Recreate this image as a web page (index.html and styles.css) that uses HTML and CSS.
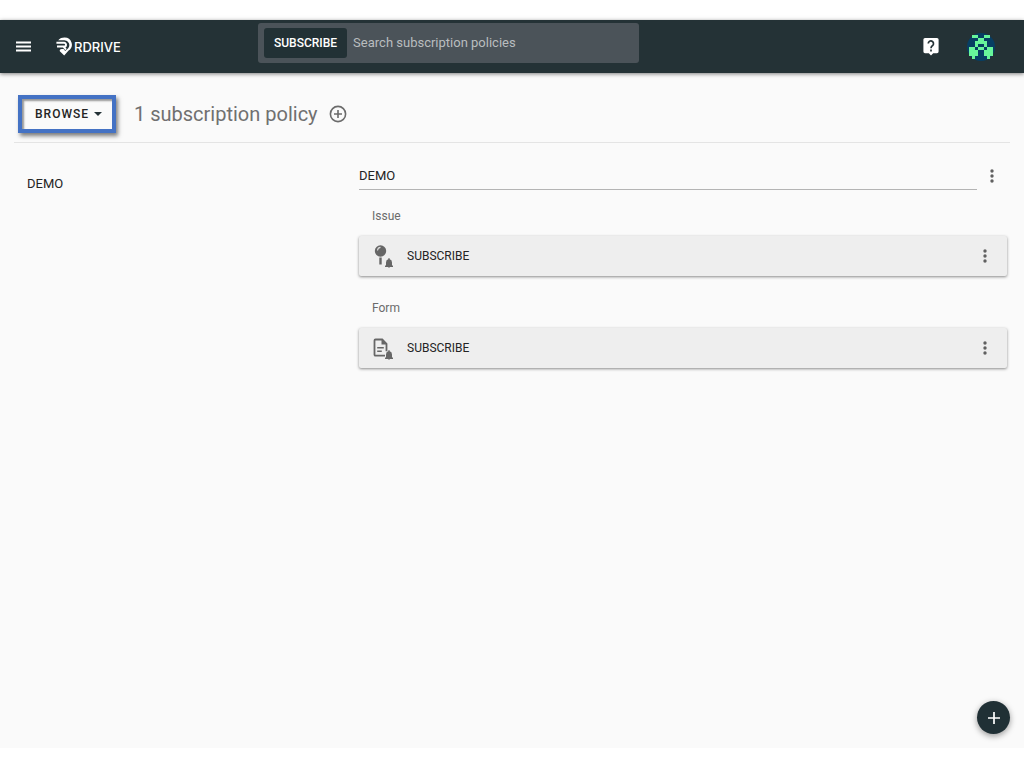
FILE: index.html
```html
<!DOCTYPE html>
<html lang="en">
<head>
<meta charset="utf-8">
<title>RDrive - Subscription policies</title>
<meta name="viewport" content="width=device-width, initial-scale=1">
<link rel="stylesheet" href="styles.css">
</head>
<body>
<div class="app">
  <header class="topbar">
    <button class="icon-btn menu-btn" aria-label="Menu">
      <svg width="16" height="12" viewBox="0 0 16 12"><path d="M0 1.500h15M0 5.500h15M0 9.500h15" stroke="#fff" stroke-width="1.800"/></svg>
    </button>
    <a class="logo" href="#">
      <svg width="17" height="19" viewBox="0 0 17 19" fill="none" stroke="#fff"><path d="M2.200 3.200C4 1 6 .4 8.400.4a7.200 7.200 0 0 1 4.200 13.200L8.200 18.400 3.600 14q0-1.900 2-1.900h2l1.600 2 3-2.800A5 5 0 0 0 8.400 3.200z" fill="#fff" stroke="none"/><path d="M.4 5.800h7.700a1.900 1.900 0 0 1 0 3.800H1M7.500 9.700l2.500 3" stroke-width="2"/></svg>
      <span>RDRIVE</span>
    </a>
    <form class="search" role="search">
      <button type="button" class="search-scope">SUBSCRIBE</button>
      <input class="search-input" type="text" aria-label="Search subscription policies" placeholder="Search subscription policies">
    </form>
    <div class="topbar-actions">
      <button class="icon-btn" aria-label="Help">
        <svg width="16" height="18" viewBox="0 0 16 18"><path d="M2 0h12q1.600 0 1.600 1.600v12q0 1.600-1.600 1.600h-3.800L8 17.600l-2.200-2.400H2Q.4 15.200.4 13.600v-12Q.4 0 2 0z" fill="#fff"/><path d="M5.300 5.600a2.600 2.600 0 1 1 4.500 1.700C8.700 8.300 8 8.700 8 10.200M8 11.500v1.900" stroke="#243236" stroke-width="1.700" fill="none"/></svg>
      </button>
      <button class="icon-btn" aria-label="Account">
        <svg width="28" height="28" viewBox="0 0 28 28"><circle cx="14" cy="14" r="14" fill="#073e63"/><path transform="translate(2 2) scale(3)" fill="#67f59b" d="M1 0h2v1H1zM5 0h2v1H5zM3 1h2v1H3zM2 2h4v2H5V3H3v1H2zM3 4h2v1H3zM0 4h2v1h1v2H2v1H1V7H0zM6 4h2v3H7v1H6V7H5V5h1z"/></svg>
      </button>
    </div>
  </header>

  <div class="page">
    <div class="toolbar">
      <button class="browse">BROWSE
        <svg width="8" height="4" viewBox="0 0 8 4"><path d="M0 0h8L4 4z" fill="#243236"/></svg>
      </button>
      <h1 class="title">1 subscription policy</h1>
      <button class="icon-btn" aria-label="Add subscription policy">
        <svg width="18" height="18" viewBox="0 0 18 18" fill="none" stroke="#6b6b6b" stroke-width="1.600"><circle cx="9" cy="9" r="7.600"/><path d="M9 5v8M5 9h8"/></svg>
      </button>
    </div>

    <div class="columns">
      <nav class="side"><a href="#demo">DEMO</a></nav>
      <main class="content" id="demo">
        <div class="group-head">
          <input class="group-name" type="text" value="DEMO" aria-label="Group name">
          <button class="icon-btn" aria-label="Group options">
            <svg class="dots" width="4" height="14" viewBox="0 0 4 14"><circle cx="2" cy="2" r="1.700"/><circle cx="2" cy="7" r="1.700"/><circle cx="2" cy="12" r="1.700"/></svg>
          </button>
        </div>
        <section class="kind">
          <h2 class="kind-name">Issue</h2>
          <div class="card">
            <svg width="20" height="24" viewBox="0 0 20 24"><circle cx="7.500" cy="7" r="5.700" fill="#666"/><path d="M4.500 6.500A3.300 3.300 0 0 1 7.500 3.400" stroke="#ddd" stroke-width="1.100" fill="none"/><path d="M7.500 13.500v7" stroke="#666" stroke-width="2.400"/><path d="M12 23v-1l1-1v-2.500q0-2.600 2.300-3.200v-1h1.400v1q2.300.6 2.300 3.200V21l1 1v1zM15 23h2q-1 1.500-2 0z" fill="#666"/></svg>
            <span class="card-title">SUBSCRIBE</span>
            <button class="icon-btn" aria-label="Policy options">
              <svg class="dots" width="4" height="14" viewBox="0 0 4 14"><circle cx="2" cy="2" r="1.700"/><circle cx="2" cy="7" r="1.700"/><circle cx="2" cy="12" r="1.700"/></svg>
            </button>
          </div>
        </section>
        <section class="kind">
          <h2 class="kind-name">Form</h2>
          <div class="card">
            <svg width="20" height="24" viewBox="0 0 20 24"><path d="M12 19.700H2.500q-1 0-1-1V4.500q0-1 1-1h6.700l4.300 4.300v7.500" fill="none" stroke="#666" stroke-width="1.800"/><path d="M8.500 3.500v5h5z" fill="#666"/><path d="M4.200 11.800h6.600M4.200 15.200h4.600" stroke="#666" stroke-width="1.500"/><path d="M12 23v-1l1-1v-2.500q0-2.600 2.300-3.200v-1h1.400v1q2.300.6 2.300 3.200V21l1 1v1zM15 23h2q-1 1.500-2 0z" fill="#666"/></svg>
            <span class="card-title">SUBSCRIBE</span>
            <button class="icon-btn" aria-label="Policy options">
              <svg class="dots" width="4" height="14" viewBox="0 0 4 14"><circle cx="2" cy="2" r="1.700"/><circle cx="2" cy="7" r="1.700"/><circle cx="2" cy="12" r="1.700"/></svg>
            </button>
          </div>
        </section>
      </main>
    </div>
  </div>
  <button class="fab" aria-label="Add">
    <svg width="12" height="12" viewBox="0 0 12 12"><path d="M6 0v12M0 6h12" stroke="#fff" stroke-width="1.700"/></svg>
  </button>
</div>
</body>
</html>
```
FILE: styles.css
```css
* { box-sizing: border-box; }

body {
  margin: 0;
  min-height: 100vh;
  padding: 20px 0;
  display: flex;
  background: #fff;
  color: #242424;
  font-family: Roboto, "Liberation Sans", sans-serif;
  font-size: 13px;
  line-height: 16px;
}

button, input { font: inherit; color: inherit; border: 0; padding: 0; background: none; }
button { cursor: pointer; }
a { color: inherit; text-decoration: none; }
svg { display: block; flex: none; }

.app { position: relative; flex: 1; min-width: 0; background: #fafafa; }

.icon-btn { display: flex; align-items: center; justify-content: center; flex: none; }

.topbar {
  display: grid;
  grid-template-columns: 242px minmax(0, 381px) 1fr;
  grid-template-areas: "brand search actions";
  align-items: center;
  height: 53px;
  padding: 0 29px 0 16px;
  background: #243236;
  box-shadow: 0 1px 4px rgba(0, 0, 0, .5);
}
.menu-btn { grid-area: brand; justify-self: start; }
.logo {
  grid-area: brand;
  margin-left: 40px;
  justify-self: start;
  display: flex;
  align-items: center;
  gap: 1px;
  color: #fff;
  font-family: Inter, sans-serif;
  font-size: 13px;
  font-weight: 500;
}
.search {
  grid-area: search;
  display: flex;
  gap: 6px;
  height: 40px;
  margin-bottom: 8px;
  padding: 5px 6px;
  border-radius: 3px;
  background: #4b5359;
}
.search-scope {
  flex: none;
  padding: 0 10px;
  border-radius: 3px;
  background: #223135;
  color: #fff;
  font-size: 12px;
  font-weight: 500;
}
.search-input { flex: 1; min-width: 0; color: #fff; outline: 0; }
.search-input::placeholder { color: #b9bdbf; opacity: 1; }
.topbar-actions { grid-area: actions; display: flex; justify-content: flex-end; align-items: center; gap: 28px; }

.page { padding: 0 14px; }
.toolbar {
  display: flex;
  align-items: center;
  height: 70px;
  padding: 12px 4px 0;
  border-bottom: 1px solid #e4e4e4;
}
.browse {
  display: flex;
  align-items: center;
  gap: 5px;
  height: 38px;
  margin-right: 18px;
  padding: 0 10px 0 13px;
  border: 4px solid #4472c4;
  box-shadow: 2px 3px 4px rgba(0, 0, 0, .5), inset 2px 2px 2px rgba(0, 0, 0, .4);
  font-size: 12px;
  font-weight: 500;
  letter-spacing: 1px;
}
.title { margin: 0 11px 0 0; font-size: 20px; line-height: 24px; font-weight: 400; color: #707070; }

.columns { display: grid; grid-template-columns: 1fr 2fr; gap: 8px; padding: 19px 3px 0 13px; }
.side { padding-top: 14px; }
.content { min-width: 0; }
.group-head { display: flex; align-items: center; gap: 13px; padding-right: 13px; }
.group-name { flex: 1; min-width: 0; height: 28px; border-bottom: 1px solid #b4b4b4; outline: 0; }
.dots { fill: #606060; }
.kind { margin-bottom: 6px; }
.kind-name { margin: 0; padding: 18px 13px 12px; font-size: 12px; line-height: 16px; font-weight: 400; color: #6b6b6b; }
.card {
  display: flex;
  align-items: center;
  height: 40px;
  padding: 0 20px 0 14px;
  border-radius: 2px;
  background: #eee;
  box-shadow: 0 1px 3px rgba(0, 0, 0, .45);
}
.card-title { flex: 1; margin-left: 14px; font-size: 12px; }

.fab {
  position: absolute;
  right: 14px;
  bottom: 14px;
  display: flex;
  align-items: center;
  justify-content: center;
  width: 33px;
  height: 33px;
  border-radius: 50%;
  background: #203035;
  box-shadow: 0 2px 6px rgba(0, 0, 0, .4);
}
```
